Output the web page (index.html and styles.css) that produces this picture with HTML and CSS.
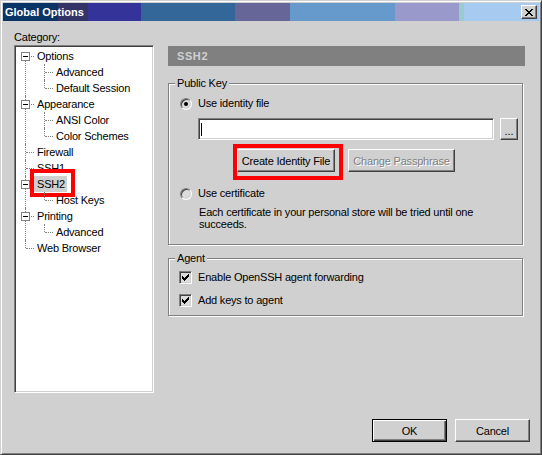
FILE: index.html
```html
<!DOCTYPE html>
<html lang="en">
<head>
<meta charset="utf-8">
<title>Global Options</title>
<link rel="stylesheet" href="styles.css">
</head>
<body>
<div class="window">
  <div class="titlebar">
    <span class="title">Global Options</span>
    <button class="caption-btn" aria-label="Close">
      <svg width="8" height="7" viewBox="0 0 8 7" shape-rendering="crispEdges"><path fill="#000" d="M0 0h2v1H0zM6 0h2v1H6zM1 1h2v1H1zM5 1h2v1H5zM2 2h4v1H2zM3 3h2v1H3zM2 4h4v1H2zM1 5h2v1H1zM5 5h2v1H5zM0 6h2v1H0zM6 6h2v1H6z"/></svg>
    </button>
  </div>

  <div class="main">
    <div class="left">
      <div class="cat-label">Category:</div>
      <div class="treebox">
        <ul class="tree">
          <li class="parent"><div class="row"><span class="exp"></span><span class="lbl">Options</span></div>
            <ul class="sub">
              <li><div class="row"><span class="lbl">Advanced</span></div></li>
              <li><div class="row"><span class="lbl">Default Session</span></div></li>
            </ul>
          </li>
          <li class="parent"><div class="row"><span class="exp"></span><span class="lbl">Appearance</span></div>
            <ul class="sub">
              <li><div class="row"><span class="lbl">ANSI Color</span></div></li>
              <li><div class="row"><span class="lbl">Color Schemes</span></div></li>
            </ul>
          </li>
          <li><div class="row"><span class="lbl">Firewall</span></div></li>
          <li><div class="row"><span class="lbl">SSH1</span></div></li>
          <li class="parent"><div class="row"><span class="exp"></span><span class="lbl sel">SSH2</span></div>
            <ul class="sub">
              <li><div class="row"><span class="lbl">Host Keys</span></div></li>
            </ul>
          </li>
          <li class="parent"><div class="row"><span class="exp"></span><span class="lbl">Printing</span></div>
            <ul class="sub">
              <li><div class="row"><span class="lbl">Advanced</span></div></li>
            </ul>
          </li>
          <li><div class="row"><span class="lbl">Web Browser</span></div></li>
        </ul>
      </div>
    </div>

    <div class="right">
      <div class="header">SSH2</div>

      <div class="group pk">
        <div class="legend">Public Key</div>
        <div class="choice radio-row first"><span class="radio checked"></span><span>Use identity file</span></div>
        <div class="file-row">
          <div class="textfield"><span class="caret"></span></div>
          <button class="btn small">...</button>
        </div>
        <div class="btn-row">
          <div class="callout"><button class="btn create">Create Identity File</button></div>
          <button class="btn passphrase" disabled>Change Passphrase</button>
        </div>
        <div class="choice radio-row second"><span class="radio"></span><span>Use certificate</span></div>
        <p class="desc">Each certificate in your personal store will be tried until one<br>succeeds.</p>
      </div>

      <div class="group agent">
        <div class="legend">Agent</div>
        <div class="choice check-row first"><span class="check"><svg width="7" height="7" viewBox="0 0 7 7" shape-rendering="crispEdges"><path fill="#000" d="M0 2h1v3H0zM1 3h1v3H1zM2 4h1v3H2zM3 3h1v3H3zM4 2h1v3H4zM5 1h1v3H5zM6 0h1v3H6z"/></svg></span><span>Enable OpenSSH agent forwarding</span></div>
        <div class="choice check-row second"><span class="check"><svg width="7" height="7" viewBox="0 0 7 7" shape-rendering="crispEdges"><path fill="#000" d="M0 2h1v3H0zM1 3h1v3H1zM2 4h1v3H2zM3 3h1v3H3zM4 2h1v3H4zM5 1h1v3H5zM6 0h1v3H6z"/></svg></span><span>Add keys to agent</span></div>
      </div>
    </div>
  </div>

  <div class="footer">
    <button class="btn big default">OK</button>
    <button class="btn big">Cancel</button>
  </div>
</div>
</body>
</html>
```

FILE: styles.css
```css
html, body {
  margin: 0;
  padding: 0;
}

body {
  background: #d0d0d0;
  font-family: "Liberation Sans", Arial, sans-serif;
  font-size: 11px;
  color: #000;
}

.window {
  box-sizing: border-box;
  width: 542px;
  height: 455px;
  border: 1px solid;
  border-color: #d0d0d0 #404040 #404040 #d0d0d0;
  box-shadow: inset 1px 1px 0 #fff, inset -1px -1px 0 #808080;
  padding: 2px;
  display: flex;
  flex-direction: column;
  background: #d0d0d0;
  letter-spacing: -0.2px;
}

/* ---------- title bar ---------- */
.titlebar {
  flex: none;
  height: 18px;
  display: flex;
  align-items: center;
  padding-left: 2px;
  background: linear-gradient(to right,
    #0a3366 0 55px,
    #333366 55px 85px,
    #333399 85px 138px,
    #336699 138px 232px,
    #666699 232px 287px,
    #6699cc 287px 392px,
    #9999cc 392px 456px,
    #99cccc 456px 461px,
    #a6caf0 461px);
}

.title {
  color: #fff;
  font-weight: bold;
  letter-spacing: 0;
  line-height: 18px;
}

.caption-btn {
  margin-left: auto;
  margin-right: 2px;
  box-sizing: border-box;
  width: 16px;
  height: 14px;
  padding: 0 1px 0 0;
  display: flex;
  align-items: center;
  justify-content: center;
  background: #d0d0d0;
  border: 1px solid;
  border-color: #fff #404040 #404040 #fff;
  box-shadow: inset -1px -1px 0 #808080;
}

.caption-btn svg {
  display: block;
}

/* ---------- main area ---------- */
.main {
  flex: 1;
  display: flex;
  gap: 14px;
  padding: 10px 14px 0 11px;
}

.left {
  flex: none;
  width: 140px;
}

.cat-label {
  height: 13px;
  line-height: 13px;
  margin-bottom: 1px;
}

.treebox {
  box-sizing: border-box;
  height: 348px;
  background: #fff;
  border: 1px solid;
  border-color: #808080 #fff #fff #808080;
  box-shadow: inset 1px 1px 0 #404040, inset -1px -1px 0 #d0d0d0;
  padding-top: 2px;
}

/* ---------- tree ---------- */
.tree, .sub {
  list-style: none;
  margin: 0;
  padding: 0;
}

.tree li {
  position: relative;
}

.row {
  position: relative;
  height: 16px;
  display: flex;
  align-items: center;
}

.lbl {
  position: relative;
  height: 16px;
  line-height: 16px;
  padding: 0 2px 0 3px;
  white-space: nowrap;
}

.tree > li > .row {
  padding-left: 19px;
}

.tree > li.parent > .row {
  padding-left: 6px;
}

.exp {
  position: relative;
  z-index: 1;
  box-sizing: border-box;
  width: 9px;
  height: 9px;
  margin-right: 4px;
  border: 1px solid #808080;
  background: #fff;
}

.exp::after {
  content: "";
  position: absolute;
  left: 1px;
  top: 3px;
  width: 5px;
  height: 1px;
  background: #000;
}

/* root connector lines */
.tree > li::before {
  content: "";
  position: absolute;
  left: 10px;
  top: 0;
  bottom: 0;
  border-left: 1px dotted #808080;
}

.tree > li:first-child::before {
  top: 8px;
}

.tree > li:last-child::before {
  bottom: auto;
  height: 8px;
}

.tree > li > .row::before {
  content: "";
  position: absolute;
  left: 11px;
  top: 8px;
  width: 8px;
  border-top: 1px dotted #808080;
}

/* child connector lines */
.sub > li > .row {
  padding-left: 38px;
}

.sub > li::before {
  content: "";
  position: absolute;
  left: 29px;
  top: 0;
  bottom: 0;
  border-left: 1px dotted #808080;
}

.sub > li:last-child::before {
  bottom: auto;
  height: 8px;
}

.sub > li > .row::before {
  content: "";
  position: absolute;
  left: 30px;
  top: 8px;
  width: 8px;
  border-top: 1px dotted #808080;
}

.lbl.sel {
  background: #d0d0d0;
}

.lbl.sel::after {
  content: "";
  position: absolute;
  top: -7px;
  bottom: -5px;
  left: -4px;
  right: -8px;
  border: 4px solid #ff0000;
  pointer-events: none;
}

/* ---------- right panel ---------- */
.right {
  flex: 1;
  padding-top: 15px;
  display: flex;
  flex-direction: column;
}

.header {
  height: 20px;
  display: flex;
  align-items: center;
  padding-left: 9px;
  background: #808080;
  color: #d0d0d0;
  font-weight: bold;
  letter-spacing: 0.6px;
}

.group {
  border: 1px solid #808080;
  box-shadow: inset 1px 1px 0 #fff, 1px 1px 0 #fff;
  margin-right: 2px;
}

.group.pk {
  margin-top: 17px;
  padding-bottom: 14px;
}

.group.agent {
  margin-top: 13px;
  padding-bottom: 8px;
}

.legend {
  width: max-content;
  margin: -7px 0 0 6px;
  padding: 0 2px;
  line-height: 13px;
  background: #d0d0d0;
}

.choice {
  display: flex;
  align-items: center;
  height: 13px;
  line-height: 13px;
}

.radio-row {
  padding-left: 11px;
}

.pk .radio-row.first {
  margin-top: 7px;
}

.pk .radio-row.second {
  margin-top: 15px;
}

.radio {
  position: relative;
  box-sizing: border-box;
  width: 12px;
  height: 12px;
  margin-right: 6px;
  border-radius: 50%;
  border: 1px solid;
  border-color: #808080 #fff #fff #808080;
  box-shadow: inset 1px 1px 0 #404040, inset -1px -1px 0 #d0d0d0;
  background: #dcdcdc;
}

.radio.checked::after {
  content: "";
  position: absolute;
  left: 3px;
  top: 3px;
  width: 4px;
  height: 4px;
  border-radius: 50%;
  background: #000;
}

.file-row {
  display: flex;
  gap: 6px;
  margin-top: 8px;
  padding-left: 29px;
}

.textfield {
  box-sizing: border-box;
  width: 296px;
  height: 22px;
  display: flex;
  align-items: center;
  padding-left: 2px;
  background: #fff;
  border: 1px solid;
  border-color: #808080 #fff #fff #808080;
  box-shadow: inset 1px 1px 0 #404040, inset -1px -1px 0 #d0d0d0;
}

.caret {
  width: 1px;
  height: 13px;
  background: #000;
}

.btn {
  box-sizing: border-box;
  margin: 0;
  padding: 0;
  font: inherit;
  letter-spacing: inherit;
  color: #000;
  background: #d0d0d0;
  border: 1px solid;
  border-color: #fff #404040 #404040 #fff;
  box-shadow: inset -1px -1px 0 #808080;
  display: flex;
  align-items: center;
  justify-content: center;
  white-space: nowrap;
}

.btn.small {
  width: 18px;
  height: 22px;
  letter-spacing: 0;
  padding-top: 3px;
}

.btn-row {
  display: flex;
  gap: 13px;
  margin-top: 9px;
  padding-left: 68px;
}

.callout {
  position: relative;
  display: flex;
}

.callout::after {
  content: "";
  position: absolute;
  top: -5px;
  left: -4px;
  right: -8px;
  bottom: -8px;
  border: 4px solid #ff0000;
  pointer-events: none;
}

.btn.create {
  width: 98px;
  height: 23px;
}

.btn.passphrase {
  width: 107px;
  height: 23px;
  color: #808080;
  text-shadow: 1px 1px 0 #fff;
}

.desc {
  margin: 6px 0 0;
  padding-left: 30px;
  line-height: 12px;
}

.check-row {
  padding-left: 10px;
}

.agent .check-row.first {
  margin-top: 6px;
}

.agent .check-row.second {
  margin-top: 10px;
}

.check {
  box-sizing: border-box;
  width: 13px;
  height: 13px;
  margin-right: 6px;
  padding: 2px 0 0 2px;
  display: flex;
  border: 1px solid;
  border-color: #808080 #fff #fff #808080;
  box-shadow: inset 1px 1px 0 #404040, inset -1px -1px 0 #d0d0d0;
  background: #dcdcdc;
}

.check svg {
  display: block;
}

/* ---------- footer ---------- */
.footer {
  flex: none;
  display: flex;
  justify-content: flex-end;
  gap: 8px;
  padding: 0 9px 10px 0;
}

.btn.big {
  width: 75px;
  height: 23px;
}

.btn.default {
  border: 1px solid #000;
  box-shadow: inset 1px 1px 0 #fff, inset -1px -1px 0 #404040, inset -2px -2px 0 #808080;
}
```
